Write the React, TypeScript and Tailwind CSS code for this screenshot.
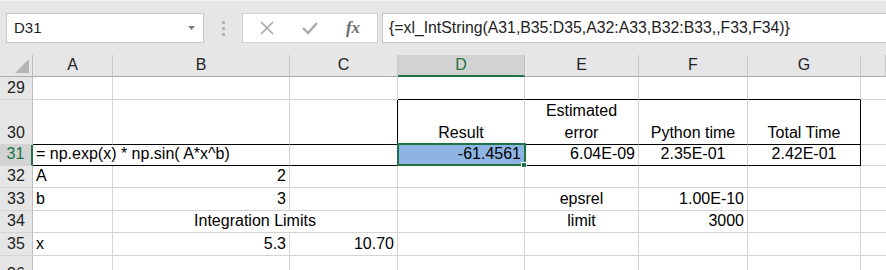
import React from "react";

const cols = ["A", "B", "C", "D", "E", "F", "G", ""];

type Align = "l" | "c" | "r";

interface CellProps {
  children?: React.ReactNode;
  align?: Align;
  span?: 1 | 2;
  right?: "gray" | "black" | "none";
  bottom?: "gray" | "black";
  className?: string;
}

function Cell({
  children,
  align = "l",
  span = 1,
  right = "gray",
  bottom = "gray",
  className = "",
}: CellProps) {
  const alignCls =
    align === "r" ? "justify-end pr-[3px]" : align === "c" ? "justify-center" : "justify-start pl-[3px]";
  const rightCls =
    right === "black"
      ? "border-r border-r-black"
      : right === "none"
      ? ""
      : "border-r border-r-[#d4d4d4]";
  const bottomCls = bottom === "black" ? "border-b-black" : "border-b-[#d4d4d4]";
  return (
    <div
      className={`flex items-end whitespace-nowrap overflow-visible border-b pb-[1px] leading-[20px] ${
        span === 2 ? "col-span-2" : ""
      } ${alignCls} ${rightCls} ${bottomCls} ${className}`}
    >
      {children}
    </div>
  );
}

function RowHead({ n, active }: { n: number; active?: boolean }) {
  return (
    <div
      className={`flex items-end justify-center border-b border-b-[#d4d4d4] pb-[1px] leading-[20px] ${
        active
          ? "bg-[#d2d2d2] text-[#217346] border-r-2 border-r-[#217346]"
          : "bg-[#e6e6e6] text-[#222] border-r border-r-[#bdbdbd]"
      }`}
    >
      {n}
    </div>
  );
}

function Toolbar() {
  return (
    <div className="h-[55px] bg-[#e6e6e6] border-t border-t-[#f2f2f2] flex items-start pt-[12px] pl-[6px] font-['Liberation_Sans',Arial,sans-serif] text-[15px] text-[#222]">
      <div className="w-[198px] h-[30px] bg-white border border-[#c6c6c6] flex items-center justify-between pl-[7px] pr-[8px]">
        <span>D31</span>
        <svg width="7" height="4" viewBox="0 0 7 4">
          <path d="M0 0 L7 0 L3.5 4 Z" fill="#7a7a7a" />
        </svg>
      </div>
      <div className="w-[38px] h-[30px] flex items-center justify-center">
        <div className="flex flex-col gap-[3px]">
          <span className="block w-[3px] h-[3px] bg-[#b5b5b5]" />
          <span className="block w-[3px] h-[3px] bg-[#b5b5b5]" />
          <span className="block w-[3px] h-[3px] bg-[#b5b5b5]" />
        </div>
      </div>
      <div className="w-[136px] h-[30px] bg-white border border-[#d2d2d2] flex items-center">
        <div className="w-[46px] flex justify-center pl-[2px]">
          <svg width="16" height="16" viewBox="0 0 16 16">
            <path d="M2 2 L14 14 M14 2 L2 14" stroke="#a8a8a8" strokeWidth="1.6" fill="none" />
          </svg>
        </div>
        <div className="w-[42px] flex justify-center">
          <svg width="16" height="14" viewBox="0 0 16 14">
            <path d="M1 7 L6 12 L15 2" stroke="#a8a8a8" strokeWidth="2.4" fill="none" />
          </svg>
        </div>
        <div className="w-[44px] flex justify-center font-['Liberation_Serif',serif] italic text-[17px] text-[#6b6b6b] font-bold">
          fx
        </div>
      </div>
      <div className="ml-[4px] flex-1 h-[30px] bg-white border border-r-0 border-[#c6c6c6] flex items-center pl-[6px] whitespace-nowrap overflow-hidden text-[15.8px]">
        {"{=xl_IntString(A31,B35:D35,A32:A33,B32:B33,,F33,F34)}"}
      </div>
    </div>
  );
}

export default function App() {
  return (
    <div className="w-[886px] h-[270px] overflow-hidden bg-white">
      <Toolbar />
      <div className="grid grid-cols-[33px_80px_177px_108px_127px_114px_109px_113px_1fr] grid-rows-[22px_23px_45px_21px_22px_23px_22px_23px_30px] font-['Liberation_Sans',Arial,sans-serif] text-[16px] text-black">
        {/* column headers */}
        <div className="bg-[#e6e6e6] border-r border-r-[#bdbdbd] border-b border-b-[#ababab] flex items-end justify-end pr-[3px] pb-[3px]">
          <svg width="14" height="14" viewBox="0 0 14 14">
            <path d="M14 0 L14 14 L0 14 Z" fill="#b4b4b4" />
          </svg>
        </div>
        {cols.map((c) =>
          c === "D" ? (
            <div
              key={c}
              className="bg-[#d2d2d2] text-[#217346] border-r border-r-[#bdbdbd] border-b-2 border-b-[#217346] flex items-end justify-center leading-[20px]"
            >
              {c}
            </div>
          ) : (
            <div
              key={c || "H"}
              className="bg-[#e6e6e6] text-[#222] border-r border-r-[#c8c8c8] border-b border-b-[#ababab] flex items-end justify-center pb-[1px] leading-[20px]"
            >
              {c}
            </div>
          )
        )}

        {/* row 29 */}
        <RowHead n={29} />
        <Cell />
        <Cell />
        <Cell />
        <Cell bottom="black" />
        <Cell bottom="black" />
        <Cell bottom="black" />
        <Cell bottom="black" />
        <Cell right="none" />

        {/* row 30 */}
        <RowHead n={30} />
        <Cell bottom="black" />
        <Cell bottom="black" />
        <Cell bottom="black" right="black" />
        <Cell bottom="black" align="c">
          Result
        </Cell>
        <Cell bottom="black" align="c" className="text-center">
          <span className="block leading-[22px] -mb-[1px]">
            Estimated
            <br />
            error
          </span>
        </Cell>
        <Cell bottom="black" align="c">
          Python time
        </Cell>
        <Cell bottom="black" right="black" align="c">
          Total Time
        </Cell>
        <Cell right="none" />

        {/* row 31 */}
        <RowHead n={31} active />
        <Cell bottom="black" span={2} className="relative z-[1]">
          = np.exp(x) * np.sin( A*x^b)
        </Cell>
        <Cell bottom="black" />
        <div className="relative flex items-end justify-end pr-[3px] pb-[1px] leading-[20px] border-b border-b-black border-r border-r-[#d4d4d4] bg-[#8db4e2]">
          -61.4561
          <div className="absolute -top-[2px] -left-[1px] -right-[2px] -bottom-[1px] border-2 border-[#217346] z-10" />
          <div className="absolute -right-[3px] -bottom-[3px] w-[6px] h-[6px] bg-[#217346] border border-white z-20" />
        </div>
        <Cell bottom="black" align="r">
          6.04E-09
        </Cell>
        <Cell bottom="black" align="c">
          2.35E-01
        </Cell>
        <Cell bottom="black" right="black" align="c">
          2.42E-01
        </Cell>
        <Cell right="none" />

        {/* row 32 */}
        <RowHead n={32} />
        <Cell>A</Cell>
        <Cell align="r">2</Cell>
        <Cell />
        <Cell />
        <Cell />
        <Cell />
        <Cell />
        <Cell right="none" />

        {/* row 33 */}
        <RowHead n={33} />
        <Cell>b</Cell>
        <Cell align="r">3</Cell>
        <Cell />
        <Cell />
        <Cell align="c">epsrel</Cell>
        <Cell align="r">1.00E-10</Cell>
        <Cell />
        <Cell right="none" />

        {/* row 34 */}
        <RowHead n={34} />
        <Cell />
        <Cell span={2} align="c">
          Integration Limits
        </Cell>
        <Cell />
        <Cell align="c">limit</Cell>
        <Cell align="r">3000</Cell>
        <Cell />
        <Cell right="none" />

        {/* row 35 */}
        <RowHead n={35} />
        <Cell>x</Cell>
        <Cell align="r">5.3</Cell>
        <Cell align="r">10.70</Cell>
        <Cell />
        <Cell />
        <Cell />
        <Cell />
        <Cell right="none" />

        {/* row 36 */}
        <RowHead n={36} />
        <Cell />
        <Cell />
        <Cell />
        <Cell />
        <Cell />
        <Cell />
        <Cell />
        <Cell right="none" />
      </div>
    </div>
  );
}
